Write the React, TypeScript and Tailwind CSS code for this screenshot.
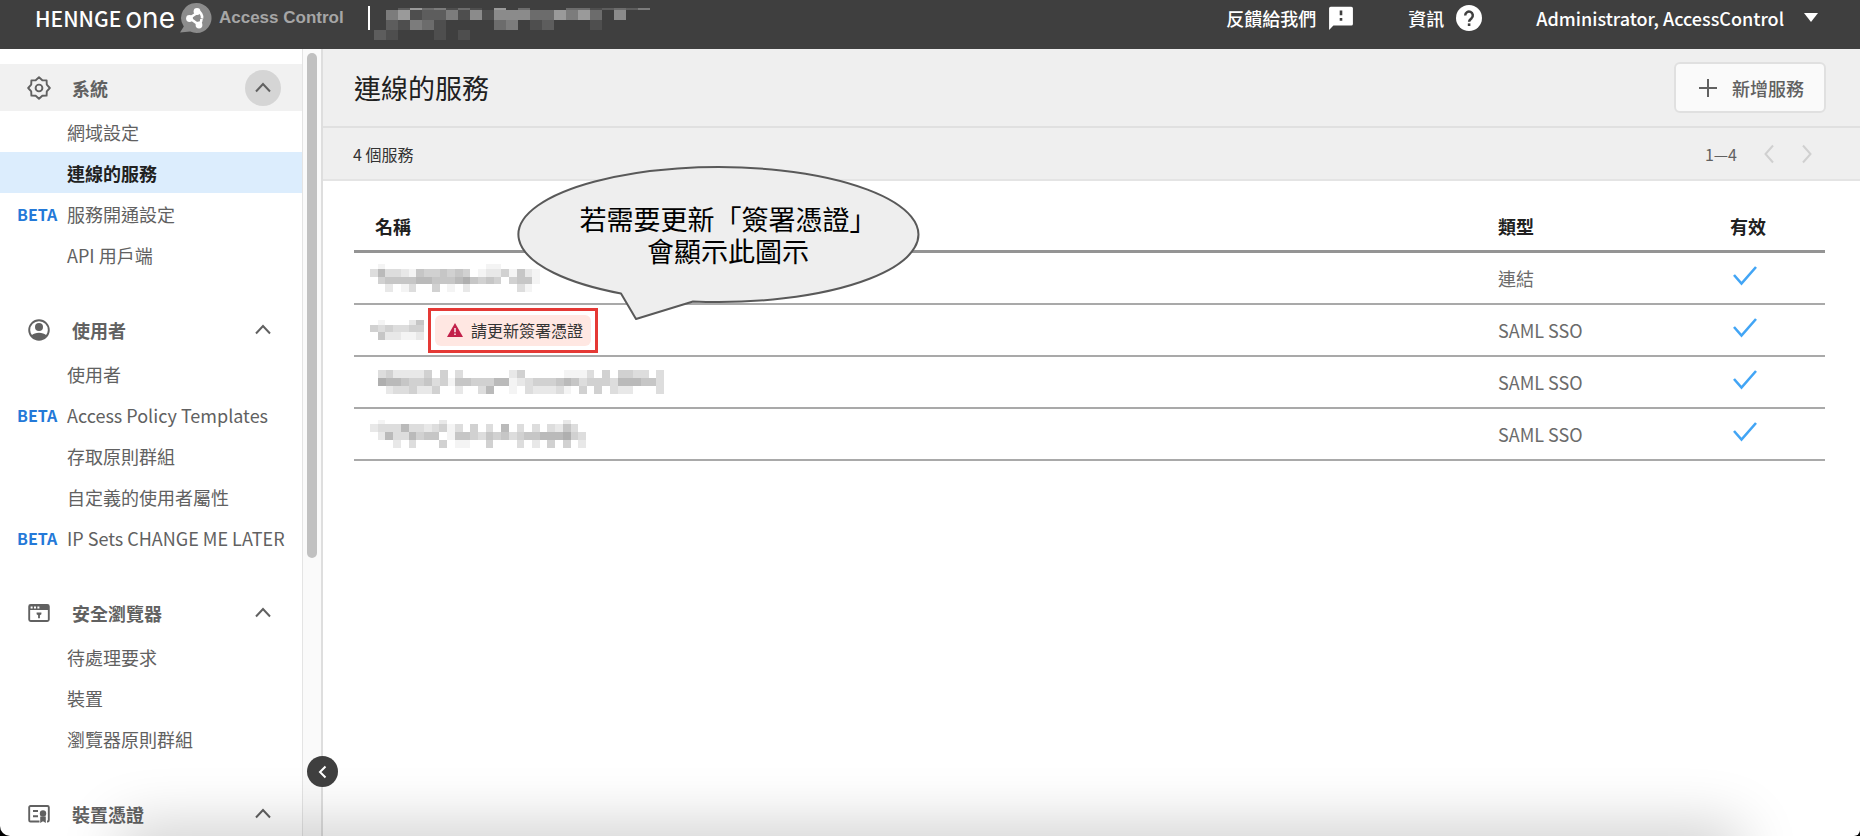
import type { ReactNode } from "react";

interface NavItem {
  label: string;
  beta?: boolean;
  active?: boolean;
}

interface NavSection {
  title: string;
  icon: ReactNode;
  highlighted?: boolean;
  items: NavItem[];
}

interface MosaicProps {
  rows: string[];
  top?: number;
  step: number;
  className: string;
}

// Each digit is the strength of one block, "0" leaves the block empty
function Mosaic({ rows, top = 0, step, className }: MosaicProps) {
  const cols = Math.max(...rows.map((row) => row.length));
  return (
    <svg
      viewBox={`0 ${top} ${cols} ${rows.length - top}`}
      preserveAspectRatio="none"
      shapeRendering="crispEdges"
      fill="currentColor"
      aria-hidden="true"
      className={className}
    >
      {rows.map((row, y) =>
        row.split("").map((level, x) =>
          level === "0" ? null : (
            <rect key={`${x}-${y}`} x={x} y={y} width="1" height="1" opacity={Number(level) * step} />
          )
        )
      )}
    </svg>
  );
}

function GearIcon() {
  return (
    <svg viewBox="0 0 24 24" className="size-6" fill="none" stroke="currentColor" strokeWidth="1.9" strokeLinejoin="round">
      <path d="M12 1.2 15.3 4.2 19.6 4.4 19.8 8.7 22.8 12 19.8 15.3 19.6 19.6 15.3 19.8 12 22.8 8.7 19.8 4.4 19.6 4.2 15.3 1.2 12 4.2 8.7 4.4 4.4 8.7 4.2Z" />
      <circle cx="12" cy="12" r="3.4" />
    </svg>
  );
}

function UserIcon() {
  return (
    <svg viewBox="0 0 24 24" className="size-6" fill="currentColor">
      <circle cx="12" cy="12" r="9.8" fill="none" stroke="currentColor" strokeWidth="1.9" />
      <circle cx="12" cy="9" r="4" />
      <path d="M4.4 17.6C6.4 15.6 9 14.8 12 14.8s5.6.8 7.6 2.8A9.8 9.8 0 0 1 12 21.8a9.8 9.8 0 0 1-7.6-4.2Z" />
    </svg>
  );
}

function BrowserIcon() {
  return (
    <svg viewBox="0 0 24 24" className="size-6" fill="currentColor">
      <rect x="2.2" y="4" width="19.6" height="16" rx="1.5" fill="none" stroke="currentColor" strokeWidth="1.9" />
      <path d="M2 4h20v5H2z" />
      <path d="M3.600 5.600h2v2h-2zM7 5.600h2v2H7zM10.400 5.600h2v2h-2z" fill="#fff" />
      <path d="M9.600 11.500h4.800v1.800l-1.500 1v3h-1.800v-3l-1.500-1z" />
    </svg>
  );
}

function CertificateIcon() {
  return (
    <svg viewBox="0 0 24 24" className="size-6" fill="none" stroke="currentColor" strokeWidth="1.9">
      <path d="M12.5 19.5H3.5a1.3 1.3 0 0 1-1.3-1.3V5.3A1.3 1.3 0 0 1 3.5 4h17a1.3 1.3 0 0 1 1.3 1.3v12.900a1.3 1.3 0 0 1-1.3 1.3H20" />
      <path d="M6 9h5M6 14.200h5" />
      <circle cx="16" cy="11.500" r="3.200" fill="currentColor" stroke="none" />
      <path d="M13.200 14.500h5.600V21L16 19.300 13.200 21z" fill="currentColor" stroke="none" />
    </svg>
  );
}

const sections: NavSection[] = [
  {
    title: "系統",
    icon: <GearIcon />,
    highlighted: true,
    items: [
      { label: "網域設定" },
      { label: "連線的服務", active: true },
      { label: "服務開通設定", beta: true },
      { label: "API 用戶端" },
    ],
  },
  {
    title: "使用者",
    icon: <UserIcon />,
    items: [
      { label: "使用者" },
      { label: "Access Policy Templates", beta: true },
      { label: "存取原則群組" },
      { label: "自定義的使用者屬性" },
      { label: "IP Sets CHANGE ME LATER", beta: true },
    ],
  },
  {
    title: "安全瀏覽器",
    icon: <BrowserIcon />,
    items: [{ label: "待處理要求" }, { label: "裝置" }, { label: "瀏覽器原則群組" }],
  },
  { title: "裝置憑證", icon: <CertificateIcon />, items: [] },
];

const services = [
  {
    type: "連結",
    name: (
      <Mosaic
        top={0.35}
        step={0.045}
        className="h-7 w-[170px] text-black"
        rows={["0100000000000001100000", "3633215445454012241521", "0455556655567545404551", "0020130040102000000310"]}
      />
    ),
  },
  {
    type: "SAML SSO",
    name: <Mosaic top={0.35} step={0.045} className="h-5 w-[54px] text-black" rows={["0100025", "4343344", "0522112"]} />,
    expiring: true,
  },
  {
    type: "SAML SSO",
    name: (
      <Mosaic
        step={0.045}
        className="ml-2 h-6 w-[286px] text-black"
        rows={[
          "3422224040300000024000001113040443303",
          "7665445341554446612344456534443666553",
          "0233422400200360010322231040403220003",
        ]}
      />
    ),
  },
  {
    type: "SAML SSO",
    name: (
      <Mosaic
        top={0.5}
        step={0.045}
        className="h-7 w-[216px] text-black"
        rows={[
          "0100000002000000000000000200",
          "2333633234130403060303032530",
          "0263364550155435453455666743",
          "0002030004011004000302040402",
        ]}
      />
    ),
  },
];

function ChevronUp() {
  return (
    <svg viewBox="0 0 16 16" className="size-4" fill="none" stroke="currentColor" strokeWidth="2">
      <path d="M1 11.500 8 4l7 7.500" />
    </svg>
  );
}

function Header() {
  return (
    <header className="flex h-[49px] shrink-0 items-start bg-[#3f3f3f] pr-[42px] pl-[35px] text-white">
      <a href="#home" className="flex h-9 items-center">
        <span className="text-[21px] leading-9 font-medium">HENNGE</span>
        <span className="ml-1 font-[Inter,sans-serif] text-[28px] leading-8">one</span>
        <svg viewBox="0 0 32 32" className="ml-[5px] size-8">
          <path d="M16.500 1a15 15 0 1 1-6.300 28.600L0 30.500l3.800-6A15 15 0 0 1 16.500 1Z" fill="#8c8c8c" />
          <g fill="none" stroke="#fff" strokeWidth="2.600">
            <path d="M18.500 10 9.500 16l9 6.500" />
            <path d="M17.500 8.500c3.500 2 5 5 4.500 8M19.500 22c1.500-1.500 2-3 2-5" />
          </g>
          <circle cx="17" cy="9.500" r="3.400" fill="#fff" />
          <circle cx="9.500" cy="16.500" r="3.400" fill="#fff" />
          <circle cx="19" cy="23" r="3.400" fill="#fff" />
        </svg>
        <span className="ml-[7px] font-['Liberation_Sans',Arial,sans-serif] text-[17px] font-bold text-[#a6a6a6]">
          Access Control
        </span>
      </a>
      <div className="mt-[6px] ml-6 h-6 w-[2px] bg-white" />
      <Mosaic
        top={0.75}
        step={0.08}
        className="mt-2 ml-1 h-8 w-[276px] text-white"
        rows={["00263413106030003312324", "04612241515553364630500", "02143100003401200010000", "21000101000000000000000"]}
      />

      <div className="ml-auto flex h-9 items-center text-lg leading-8 font-medium">
        <button type="button" className="flex items-center gap-3">
          反饋給我們
          <svg viewBox="0 0 24 24" className="size-[26px]" fill="currentColor">
            <path d="M2.500 1.500h19a1.500 1.500 0 0 1 1.500 1.500v14.500a1.500 1.500 0 0 1-1.500 1.500H5l-4 4V3a1.500 1.500 0 0 1 1.500-1.500Z" />
            <path d="M10.800 5h2.400v4.500h-2.400zM10.800 12h2.400v2.600h-2.400z" fill="#3f3f3f" />
          </svg>
        </button>
        <button type="button" className="ml-[54px] flex items-center gap-3">
          資訊
          <svg viewBox="0 0 26 26" className="size-[26px]">
            <circle cx="13" cy="13" r="13" fill="#fff" />
            <path
              d="M9.200 10.400a3.800 3.800 0 1 1 6.400 2.800c-1.500 1.300-2.500 1.900-2.500 3.500"
              fill="none"
              stroke="#3f3f3f"
              strokeWidth="2.500"
            />
            <path d="M11.800 18.400h2.600V21h-2.600z" fill="#3f3f3f" />
          </svg>
        </button>
        <button type="button" className="ml-[54px] flex items-center gap-5">
          Administrator, AccessControl
          <svg viewBox="0 0 14 10" className="h-[10px] w-[14px]" fill="currentColor">
            <path d="M0 0h14L7 9z" />
          </svg>
        </button>
      </div>
    </header>
  );
}

function Sidebar() {
  return (
    <aside className="relative flex w-[323px] shrink-0 border-r-2 border-[#dedede]">
      <nav className="min-w-0 flex-1 overflow-hidden pt-[15px] text-lg text-[#616161]">
        {sections.map((section) => (
          <section key={section.title} className="mb-[31px]">
            <h2 className={`flex h-[47px] items-center pr-[21px] pl-[27px] ${section.highlighted ? "bg-[#f1f1f1]" : ""}`}>
              {section.icon}
              <span className="ml-[21px] flex-1 font-bold">{section.title}</span>
              <button
                type="button"
                aria-label={section.title}
                className={`flex size-9 items-center justify-center rounded-full ${section.highlighted ? "bg-[#d5d5d5]" : ""}`}
              >
                <ChevronUp />
              </button>
            </h2>
            <ul>
              {section.items.map((item) => (
                <li key={item.label}>
                  <a
                    href="#nav"
                    className={`flex h-[41px] items-center whitespace-nowrap ${
                      item.active ? "bg-[#dcedfd] font-bold text-[#212121]" : ""
                    }`}
                  >
                    <span className="w-[67px] pl-[17px] text-base font-bold text-[#2479d8]">{item.beta && "BETA"}</span>
                    {item.label}
                  </a>
                </li>
              ))}
            </ul>
          </section>
        ))}
      </nav>
      <div className="w-[19px] border-l border-[#e4e4e4] bg-[#fafafa] px-1 pt-1">
        <div className="h-[505px] rounded-full bg-[#c1c1c1]" />
      </div>
      <button
        type="button"
        aria-label="收合選單"
        className="absolute -right-[17px] bottom-[49px] z-10 flex size-[31px] items-center justify-center rounded-full bg-[#3f3f3f] text-white"
      >
        <svg viewBox="0 0 16 16" className="size-4" fill="none" stroke="currentColor" strokeWidth="2">
          <path d="M10.500 2.500 5 8l5.500 5.500" />
        </svg>
      </button>
    </aside>
  );
}

function CertificateBadge() {
  return (
    <span className="ml-1 border-3 border-[#e53935] p-1">
      <span className="flex h-[31px] items-center gap-2 rounded-md bg-[#ffe7e2] pr-2 pl-3 text-base text-[#333]">
        <svg viewBox="0 0 16 14" className="h-[14px] w-4">
          <path d="M8 0 16 14H0Z" fill="#c2214a" />
          <path d="M7.300 5h1.400v4.300H7.300zM7.300 10.500h1.400V12H7.300z" fill="#fff" />
        </svg>
        請更新簽署憑證
      </span>
    </span>
  );
}

function Callout() {
  return (
    <div className="absolute top-[118px] left-[195px] h-[154px] w-[402px] text-black">
      <svg viewBox="0 0 402 154" className="absolute inset-0 size-full overflow-visible">
        <path
          d="M103 126.500A200 67.500 0 1 1 175 134.500L118 152Z"
          fill="#eee"
          stroke="#595959"
          strokeWidth="2"
          strokeLinejoin="round"
        />
      </svg>
      <p className="relative pt-[38px] pl-[18px] text-center font-['Liberation_Sans','Noto_Sans_CJK_TC',sans-serif] text-[27px] leading-8 whitespace-nowrap">
        若需要更新「簽署憑證」
        <br />
        會顯示此圖示
      </p>
    </div>
  );
}

function ServiceTable() {
  return (
    <table className="w-full table-fixed border-separate border-spacing-0 text-left text-lg">
      <thead className="text-[#212121]">
        <tr>
          <th className="h-[52px] border-b-3 border-[#949494] p-0 pl-[21px]">名稱</th>
          <th className="w-[232px] border-b-3 border-[#949494] p-0">類型</th>
          <th className="w-[95px] border-b-3 border-[#949494] p-0">有效</th>
        </tr>
      </thead>
      <tbody className="text-[#6b6b6b]">
        {services.map((service, index) => (
          <tr key={index}>
            <td className="h-[52px] border-b-2 border-[#a9a9a9] p-0 pl-4">
              <div className="flex items-center">
                {service.name}
                {service.expiring && <CertificateBadge />}
              </div>
            </td>
            <td className="border-b-2 border-[#a9a9a9] p-0">{service.type}</td>
            <td className="border-b-2 border-[#a9a9a9] p-0">
              <svg viewBox="0 0 26 26" className="ml-[2px] size-[26px]" fill="none" stroke="#42a5f5" strokeWidth="2.600">
                <path d="M2 10l7.500 8.500L24 2" />
              </svg>
            </td>
          </tr>
        ))}
      </tbody>
    </table>
  );
}

export default function App() {
  return (
    <div className="h-screen bg-black font-['Noto_Sans_CJK_TC',sans-serif]">
      <div className="relative flex h-full flex-col overflow-hidden rounded-br-md rounded-bl-[10px] bg-white">
        <Header />
        <div className="flex min-h-0 flex-1">
          <Sidebar />
          <main className="relative min-w-0 flex-1">
            <div className="flex h-[79px] items-center justify-between border-b-2 border-[#e0e0e0] bg-[#efefef] pr-[34px] pl-[31px]">
              <h1 className="pt-[2px] text-[27px] text-[#212121]">連線的服務</h1>
              <button
                type="button"
                className="flex h-[51px] items-center gap-[14px] rounded-md border-2 border-[#e0e0e0] bg-[#fafafa] pr-5 pl-[22px] text-lg font-medium text-[#616161]"
              >
                <svg viewBox="0 0 20 20" className="size-5" fill="none" stroke="currentColor" strokeWidth="2">
                  <path d="M10 1v18M1 10h18" />
                </svg>
                新增服務
              </button>
            </div>
            <div className="flex h-[53px] items-center justify-between border-b-2 border-[#e4e4e4] bg-[#efefef] pr-[43px] pl-[30px] text-base text-[#333]">
              <p>4 個服務</p>
              <div className="flex items-center text-[#616161]">
                <span>1—4</span>
                <button type="button" aria-label="上一頁" disabled className="ml-[22px] text-[#d0d0d0]">
                  <svg viewBox="0 0 20 20" className="size-5" fill="none" stroke="currentColor" strokeWidth="2">
                    <path d="M14 1.500 6.500 10l7.500 8.500" />
                  </svg>
                </button>
                <button type="button" aria-label="下一頁" disabled className="ml-[18px] text-[#d0d0d0]">
                  <svg viewBox="0 0 20 20" className="size-5" fill="none" stroke="currentColor" strokeWidth="2">
                    <path d="M6 1.500 13.500 10 6 18.500" />
                  </svg>
                </button>
              </div>
            </div>
            <div className="pt-5 pr-[35px] pl-[31px]">
              <ServiceTable />
            </div>
            <Callout />
          </main>
        </div>
        <div className="pointer-events-none absolute inset-x-[130px] top-full h-10 shadow-[0_0_60px_10px_rgba(0,0,0,0.2)]" />
      </div>
    </div>
  );
}
